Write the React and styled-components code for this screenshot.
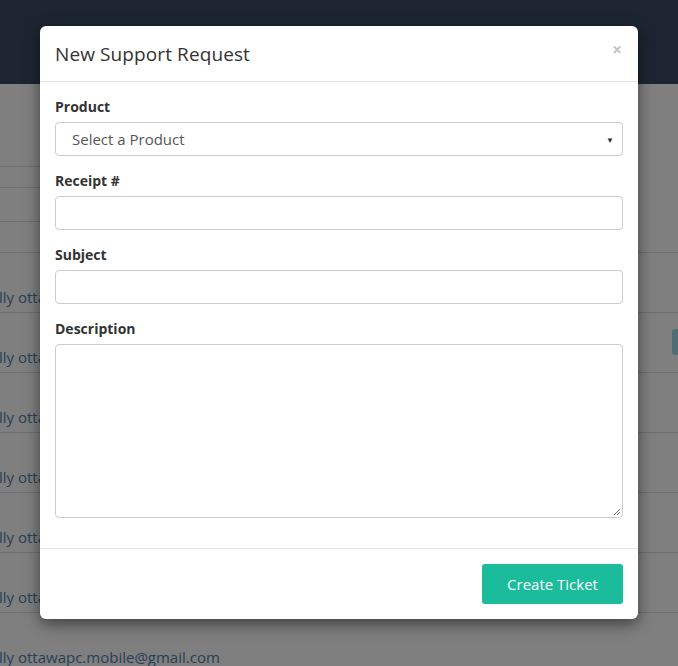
import React from 'react'
import styled, { createGlobalStyle } from 'styled-components'

const GlobalStyle = createGlobalStyle`
  html, body {
    margin: 0;
    padding: 0;
    background: #fff;
    font-family: "Open Sans", "Liberation Sans", sans-serif;
    overflow: hidden;
  }
  * { box-sizing: border-box; }
`

const Page = styled.div`
  width: 678px;
  height: 666px;
  overflow: hidden;
  position: relative;
`

const NavBar = styled.div`
  height: 84px;
  background: #384b62;
`

const Toolbar = styled.div`
  height: 169px;
  padding-top: 82px;
  border-bottom: 1px solid #dcdcdc;
`

const SearchBox = styled.div`
  width: 300px;
  height: 86px;
  border-top: 1px solid #dcdcdc;
  padding-top: 20px;
`

const SearchInput = styled.div`
  width: 100%;
  height: 35px;
  border-top: 1px solid #dcdcdc;
  border-bottom: 1px solid #dcdcdc;
`

const Row = styled.div`
  height: 60px;
  border-bottom: 1px solid #dcdcdc;
  display: flex;
  align-items: flex-end;
  justify-content: space-between;
  padding-bottom: 5px;
`

const Email = styled.span`
  font-size: 15px;
  color: #4f7fb0;
  margin-left: -1px;
  line-height: 20px;
`

const TealTag = styled.span`
  width: 10px;
  height: 26px;
  margin-bottom: 12px;
  margin-right: -4px;
  border-radius: 3px;
  background: #a2dbe5;
  visibility: ${p => (p.show ? 'visible' : 'hidden')};
`

const Overlay = styled.div`
  position: absolute;
  inset: 0;
  background: rgba(0, 0, 0, 0.5);
`

const Modal = styled.div`
  position: absolute;
  left: 40px;
  top: 26px;
  width: 598px;
  background: #fff;
  border-radius: 6px;
  box-shadow: 0 5px 15px rgba(0, 0, 0, 0.5);
  display: flex;
  flex-direction: column;
`

const Header = styled.div`
  display: flex;
  align-items: center;
  justify-content: space-between;
  height: 56px;
  padding: 0 15px;
  border-bottom: 1px solid #e5e5e5;
`

const Title = styled.h4`
  margin: 0;
  font-size: 19px;
  font-weight: 400;
  color: #333;
  letter-spacing: 0.1px;
`

const Close = styled.span`
  font-size: 17px;
  font-weight: 700;
  color: #c4c4c4;
  margin-top: -8px;
  margin-right: 1px;
`

const Body = styled.div`
  padding: 15px;
  display: flex;
  flex-direction: column;
  gap: 15px;
  padding-bottom: 30px;
`

const Group = styled.div`
  display: flex;
  flex-direction: column;
  gap: 5px;
`

const Label = styled.label`
  font-size: 14px;
  font-weight: 700;
  line-height: 20px;
  color: #333;
`

const Field = styled.div`
  height: ${p => p.h || 34}px;
  border: 1px solid #ccc;
  border-radius: 4px;
  background: #fff;
  display: flex;
  align-items: center;
  justify-content: space-between;
  padding: 0 8px 0 16px;
  font-size: 15px;
  color: #555;
  position: relative;
`

const Caret = styled.span`
  font-size: 8px;
  color: #333;
`

const Grip = styled.svg`
  position: absolute;
  right: 1px;
  bottom: 1px;
`

const Footer = styled.div`
  border-top: 1px solid #e5e5e5;
  padding: 15px;
  display: flex;
  justify-content: flex-end;
`

const Button = styled.button`
  width: 141px;
  height: 40px;
  border: none;
  border-radius: 3px;
  background: #1abc9c;
  color: #fff;
  font-family: inherit;
  font-size: 15px;
`

const rows = [0, 1, 2, 3, 4, 5, 6]

export default function App() {
  return (
    <Page>
      <GlobalStyle />
      <NavBar />
      <Toolbar>
        <SearchBox>
          <SearchInput />
        </SearchBox>
      </Toolbar>
      {rows.map(i => (
        <Row key={i}>
          <Email>lly ottawapc.mobile@gmail.com</Email>
          <TealTag show={i === 1} />
        </Row>
      ))}
      <Overlay />
      <Modal>
        <Header>
          <Title>New Support Request</Title>
          <Close>×</Close>
        </Header>
        <Body>
          <Group>
            <Label>Product</Label>
            <Field>
              Select a Product
              <Caret>▼</Caret>
            </Field>
          </Group>
          <Group>
            <Label>Receipt #</Label>
            <Field />
          </Group>
          <Group>
            <Label>Subject</Label>
            <Field />
          </Group>
          <Group>
            <Label>Description</Label>
            <Field h={174}>
              <Grip width="9" height="9" viewBox="0 0 9 9">
                <path d="M8 2 L2 8 M8 5 L5 8" stroke="#777" strokeWidth="1" />
              </Grip>
            </Field>
          </Group>
        </Body>
        <Footer>
          <Button>Create Ticket</Button>
        </Footer>
      </Modal>
    </Page>
  )
}
